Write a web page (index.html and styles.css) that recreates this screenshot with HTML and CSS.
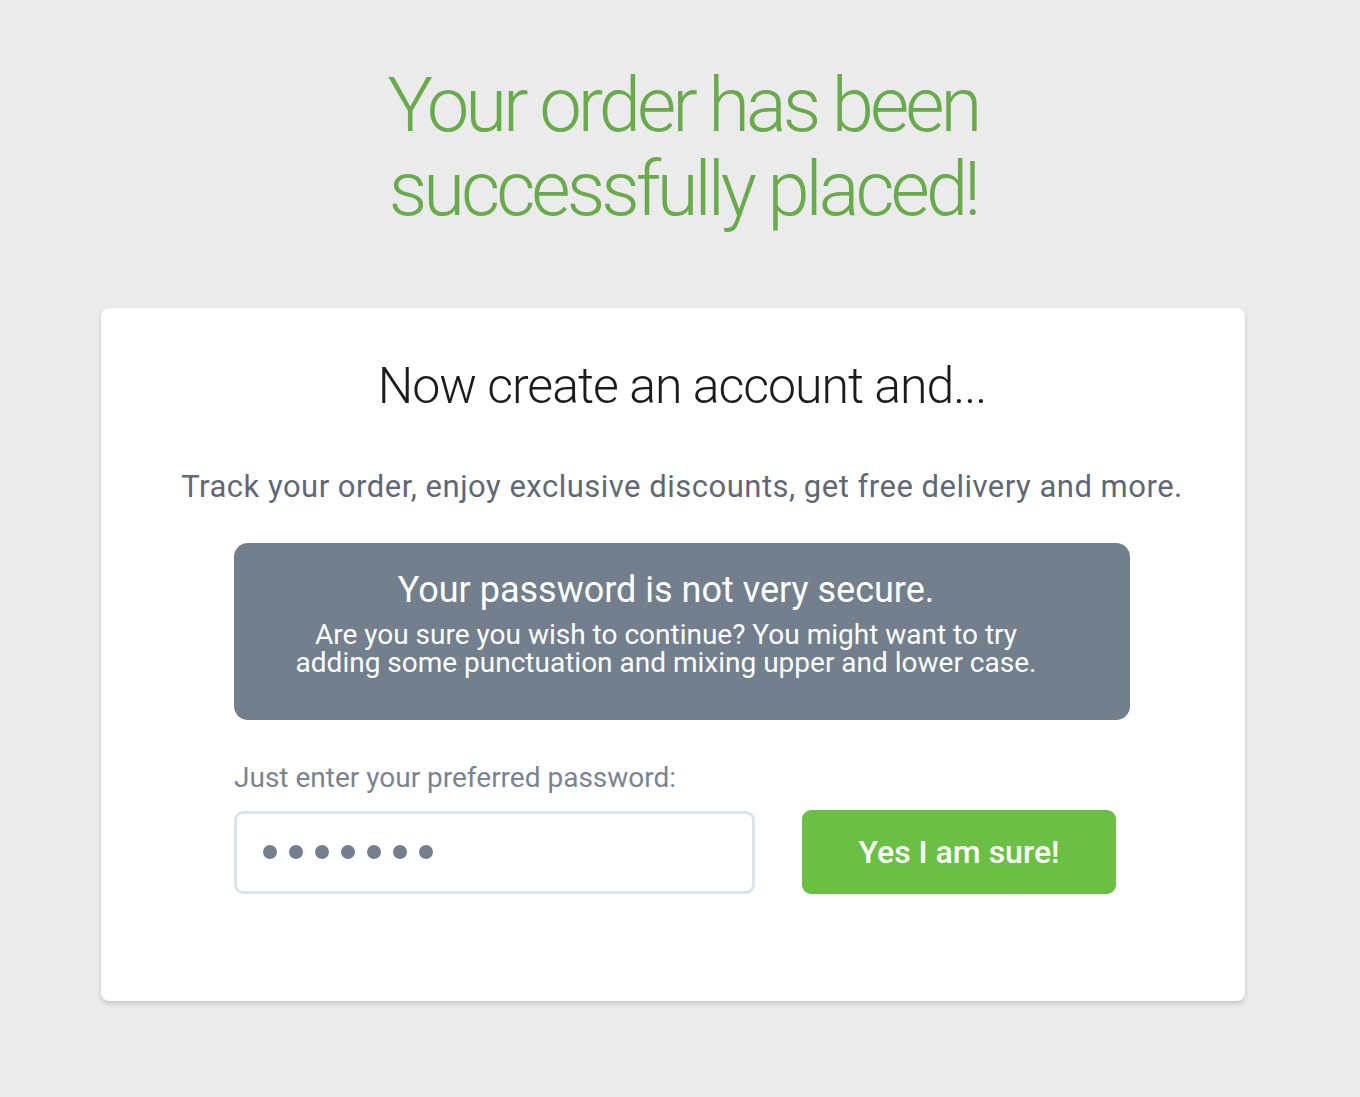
FILE: index.html
```html
<!DOCTYPE html>
<html lang="en">
<head>
<meta charset="utf-8">
<title>Order placed</title>
<link rel="stylesheet" href="styles.css">
</head>
<body>
<main class="page">
  <h1 class="success">Your order has been<br>successfully placed!</h1>
  <section class="card">
    <h2 class="card-title">Now create an account and...</h2>
    <p class="card-sub">Track your order, enjoy exclusive discounts, get free delivery and more.</p>
    <div class="warning">
      <p class="warning-title">Your password is not very secure.</p>
      <p class="warning-text"><span class="wl">Are you sure you wish to continue? You might want to try</span><span class="wl">adding some punctuation and mixing upper and lower case.</span></p>
    </div>
    <div class="form">
      <label class="label" for="pw">Just enter your preferred password:</label>
      <div class="row">
        <div class="input" id="pw">
          <span class="dot"></span><span class="dot"></span><span class="dot"></span><span class="dot"></span><span class="dot"></span><span class="dot"></span><span class="dot"></span>
        </div>
        <button class="btn">Yes I am sure!</button>
      </div>
    </div>
  </section>
</main>
</body>
</html>
```
FILE: styles.css
```css
* { box-sizing: border-box; }
html, body { margin: 0; padding: 0; }
body {
  background: #ebebeb;
  font-family: Roboto, "Liberation Sans", sans-serif;
  height: 1097px;
  overflow: hidden;
}
.page {
  display: flex;
  flex-direction: column;
  padding-top: 63px;
}
.success {
  margin: 0;
  align-self: center;
  margin-left: 6px;
  text-align: center;
  font-weight: 300;
  font-size: 76px;
  line-height: 84px;
  letter-spacing: -4px;
  color: #69ab4c;
}
.card {
  margin: 77px 0 0 101px;
  width: 1144px;
  height: 693px;
  background: #fff;
  border-radius: 8px;
  box-shadow: 0 3px 5px rgba(0,0,0,0.14), 0 0 1px rgba(0,0,0,0.12);
  padding: 48px 115px 0 133px;
  display: flex;
  flex-direction: column;
  align-items: center;
}
.card-title {
  margin: 0;
  font-weight: 300;
  font-size: 50px;
  line-height: 60px;
  letter-spacing: -1px;
  color: #1c1c1c;
  white-space: nowrap;
}
.card-sub {
  margin: 51px 0 0;
  font-size: 31px;
  line-height: 40px;
  letter-spacing: 0.5px;
  color: #5f6873;
  white-space: nowrap;
}
.warning {
  margin-top: 36px;
  width: 896px;
  height: 177px;
  background: #737f8c;
  border-radius: 14px;
  color: #fff;
  text-align: center;
  padding: 24px 32px 0 0;
}
.warning-title {
  margin: 0;
  font-size: 36px;
  line-height: 46px;
}
.warning-text {
  margin: 8px 0 0;
  font-size: 28px;
  line-height: 28px;
}
.wl {
  display: block;
  height: 28px;
}
.form {
  width: 896px;
  margin-top: 40px;
}
.label {
  display: block;
  font-size: 28px;
  line-height: 36px;
  color: #7a8490;
}
.row {
  display: flex;
  align-items: center;
  gap: 47px;
  margin-top: 14px;
}
.input {
  width: 521px;
  height: 83px;
  border: 3px solid #dde3e6;
  border-radius: 9px;
  display: flex;
  align-items: center;
  gap: 12px;
  padding-left: 26px;
}
.dot {
  width: 14px;
  height: 14px;
  border-radius: 50%;
  background: #737f8c;
}
.btn {
  width: 314px;
  height: 84px;
  border: 0;
  border-radius: 9px;
  background: #6cbf45;
  color: #fff;
  font-family: Roboto, "Liberation Sans", sans-serif;
  font-weight: 500;
  font-size: 32px;
  padding: 0;
  cursor: pointer;
}
```
